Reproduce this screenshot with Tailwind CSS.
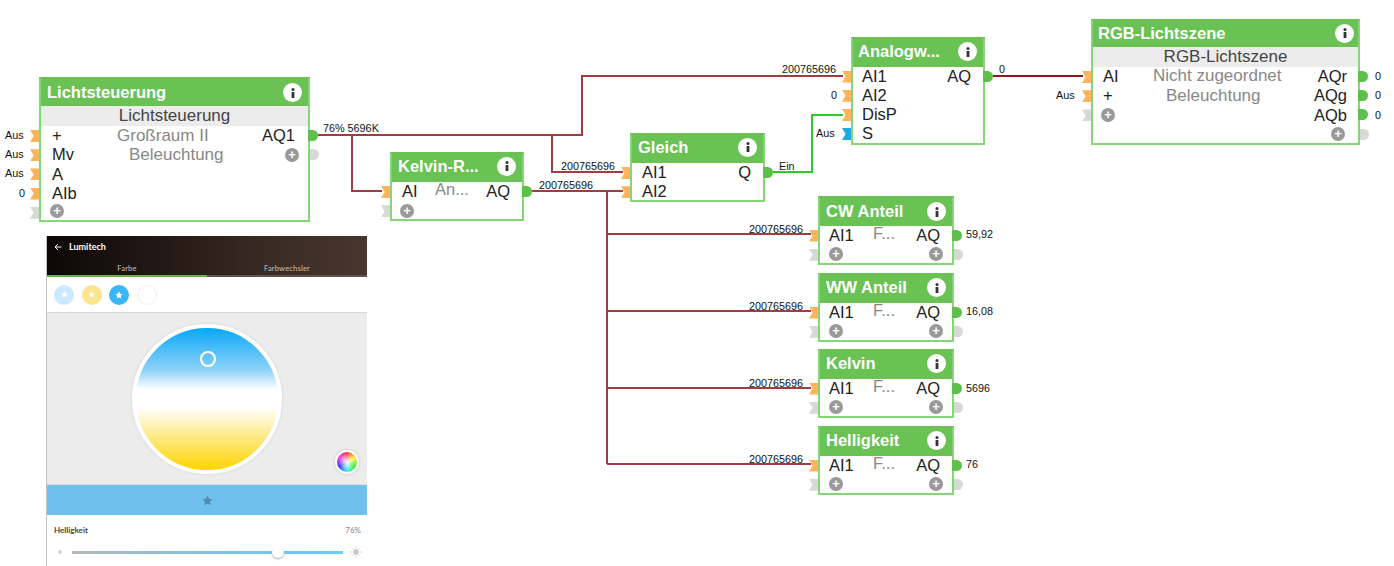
<!DOCTYPE html>
<html lang="de">
<head>
  <meta charset="UTF-8">
  <title>Lichtsteuerung</title>
  <script src="https://cdn.jsdelivr.net/npm/@tailwindcss/browser@4"></script>
</head>
<body class="bg-white">
<div class="relative w-[1394px] h-[566px] overflow-hidden bg-white font-['Liberation_Sans',Arial,sans-serif] text-[#222]">

  <!-- wires -->
  <svg class="absolute left-0 top-0" width="1394" height="566" fill="none">
    <g stroke="#a13c42" stroke-width="2">
      <path d="M318 135H582V76H843"/>
      <path d="M352 135V191H382"/>
      <path d="M552 135V172H623"/>
      <path d="M532 191H623"/>
      <path d="M607 191V464"/>
      <path d="M607 234H811"/>
      <path d="M607 311H811"/>
      <path d="M607 388H811"/>
      <path d="M607 464H811"/>
    </g>
    <path d="M993 76H1083" stroke="#8e1a20" stroke-width="2"/>
    <path d="M772 172H812V115H843" stroke="#2ccb2c" stroke-width="2"/>
  </svg>

  <!-- wire values -->
  <div class="absolute inset-0 text-[10.8px] leading-[12px] text-[#111]">
    <span class="absolute left-[323px] top-[122px]">76% 5696K</span>
    <span class="absolute left-[561px] top-[160px]">200765696</span>
    <span class="absolute left-[539px] top-[179px]">200765696</span>
    <span class="absolute left-[782px] top-[63px]">200765696</span>
    <span class="absolute left-[999px] top-[63px]">0</span>
    <span class="absolute left-[779px] top-[160px]">Ein</span>
    <span class="absolute left-[816px] top-[127px]">Aus</span>
    <span class="absolute left-[831px] top-[89px]">0</span>
    <span class="absolute left-[1056px] top-[89px]">Aus</span>
    <span class="absolute left-[5px] top-[129px]">Aus</span>
    <span class="absolute left-[5px] top-[148px]">Aus</span>
    <span class="absolute left-[5px] top-[167px]">Aus</span>
    <span class="absolute left-[19px] top-[187px]">0</span>
    <span class="absolute left-[749px] top-[223px]">200765696</span>
    <span class="absolute left-[749px] top-[300px]">200765696</span>
    <span class="absolute left-[749px] top-[377px]">200765696</span>
    <span class="absolute left-[749px] top-[453px]">200765696</span>
    <span class="absolute left-[966px] top-[228px]">59,92</span>
    <span class="absolute left-[966px] top-[305px]">16,08</span>
    <span class="absolute left-[966px] top-[382px]">5696</span>
    <span class="absolute left-[966px] top-[458px]">76</span>
    <span class="absolute left-[1375px] top-[70px]">0</span>
    <span class="absolute left-[1375px] top-[89px]">0</span>
    <span class="absolute left-[1375px] top-[109px]">0</span>
  </div>

  <!-- Lichtsteuerung -->
  <div class="absolute left-[39px] top-[77px] w-[271px] h-[145px] border-2 border-[#84d677] border-t-[#69c253] bg-white">
    <div class="flex items-center justify-between h-[27px] pl-[6px] pr-[6px] bg-[#69c253] text-white font-bold text-[16.5px]">
      <span>Lichtsteuerung</span>
      <span class="flex items-center justify-center w-[19px] h-[19px] rounded-full bg-white"><svg width="4" height="10" viewBox="0 0 4 10" fill="#333"><circle cx="2" cy="1.6" r="1.5"/><rect x="0.6" y="4" width="2.8" height="6"/></svg></span>
    </div>
    <div class="h-[20px] bg-[#ececec] text-center text-[17px] leading-[20px] text-[#444]">Lichtsteuerung</div>
    <div class="relative flex items-center h-[19.2px] pl-[11px] pr-[13px] text-[16.5px]">
      <i class="absolute left-[-11px] top-[4px] w-[9px] h-[12px] bg-[#fdb45c] [clip-path:polygon(0_0,100%_0,100%_100%,0_100%,40%_50%)]"></i>
      <span class="w-[65px]">+</span>
      <span class="flex-1 text-[#888] text-[17px]">Großraum II</span>
      <span>AQ1</span>
      <i class="absolute right-[-10px] top-[4px] w-[10px] h-[11px] rounded-r-full bg-[#5cc04a]"></i>
    </div>
    <div class="relative flex items-center h-[19.2px] pl-[11px] pr-[9px] text-[16.5px]">
      <i class="absolute left-[-11px] top-[4px] w-[9px] h-[12px] bg-[#fdb45c] [clip-path:polygon(0_0,100%_0,100%_100%,0_100%,40%_50%)]"></i>
      <span class="w-[77px]">Mv</span>
      <span class="flex-1 text-[#888] text-[17px]">Beleuchtung</span>
      <i class="w-[14px] h-[14px] rounded-full bg-[#999] text-white text-center not-italic font-bold text-[13px] leading-[14px]">+</i>
      <i class="absolute right-[-11px] top-[4px] w-[9px] h-[11px] rounded-r-full bg-[#d8d8d4]"></i>
    </div>
    <div class="relative flex items-center h-[19.2px] pl-[11px] text-[16.5px]">
      <i class="absolute left-[-11px] top-[4px] w-[9px] h-[12px] bg-[#fdb45c] [clip-path:polygon(0_0,100%_0,100%_100%,0_100%,40%_50%)]"></i>
      <span>A</span>
    </div>
    <div class="relative flex items-center h-[19.2px] pl-[11px] text-[16.5px]">
      <i class="absolute left-[-11px] top-[4px] w-[9px] h-[12px] bg-[#fdb45c] [clip-path:polygon(0_0,100%_0,100%_100%,0_100%,40%_50%)]"></i>
      <span>AIb</span>
    </div>
    <div class="relative flex items-center h-[19.2px] pl-[9px]">
      <i class="absolute left-[-11px] top-[4px] w-[9px] h-[12px] bg-[#d8d8d4] [clip-path:polygon(0_0,100%_0,100%_100%,0_100%,40%_50%)]"></i>
      <i class="w-[14px] h-[14px] rounded-full bg-[#999] text-white text-center not-italic font-bold text-[13px] leading-[14px] -translate-y-[1px]">+</i>
    </div>
  </div>

  <!-- Kelvin-R... -->
  <div class="absolute left-[390px] top-[152px] w-[134px] h-[69px] border-2 border-[#84d677] border-t-[#69c253] bg-white">
    <div class="flex items-center justify-between h-[28px] pl-[6px] pr-[6px] pb-[4px] bg-[#69c253] text-white font-bold text-[16.5px]">
      <span>Kelvin-R...</span>
      <span class="flex items-center justify-center w-[19px] h-[19px] rounded-full bg-white"><svg width="4" height="10" viewBox="0 0 4 10" fill="#333"><circle cx="2" cy="1.6" r="1.5"/><rect x="0.6" y="4" width="2.8" height="6"/></svg></span>
    </div>
    <div class="relative flex items-center h-[19.2px] pl-[10px] pr-[12px] text-[16.5px]">
      <i class="absolute left-[-11px] top-[4px] w-[9px] h-[12px] bg-[#fdb45c] [clip-path:polygon(0_0,100%_0,100%_100%,0_100%,40%_50%)]"></i>
      <span class="w-[33px]">AI</span>
      <span class="flex-1 text-[#888] -translate-y-[2px]">An...</span>
      <span>AQ</span>
      <i class="absolute right-[-10px] top-[4px] w-[10px] h-[11px] rounded-r-full bg-[#5cc04a]"></i>
    </div>
    <div class="relative flex items-center h-[19.2px] pl-[8px]">
      <i class="absolute left-[-11px] top-[4px] w-[9px] h-[12px] bg-[#d8d8d4] [clip-path:polygon(0_0,100%_0,100%_100%,0_100%,40%_50%)]"></i>
      <i class="w-[14px] h-[14px] rounded-full bg-[#999] text-white text-center not-italic font-bold text-[13px] leading-[14px]">+</i>
    </div>
  </div>

  <!-- Gleich -->
  <div class="absolute left-[630px] top-[133px] w-[135px] h-[69px] border-2 border-[#84d677] border-t-[#69c253] bg-white">
    <div class="flex items-center justify-between h-[28px] pl-[6px] pr-[6px] pb-[4px] bg-[#69c253] text-white font-bold text-[16.5px]">
      <span>Gleich</span>
      <span class="flex items-center justify-center w-[19px] h-[19px] rounded-full bg-white"><svg width="4" height="10" viewBox="0 0 4 10" fill="#333"><circle cx="2" cy="1.6" r="1.5"/><rect x="0.6" y="4" width="2.8" height="6"/></svg></span>
    </div>
    <div class="relative flex items-center justify-between h-[19.2px] pl-[10px] pr-[12px] text-[16.5px]">
      <i class="absolute left-[-11px] top-[4px] w-[9px] h-[12px] bg-[#fdb45c] [clip-path:polygon(0_0,100%_0,100%_100%,0_100%,40%_50%)]"></i>
      <span>AI1</span>
      <span>Q</span>
      <i class="absolute right-[-10px] top-[4px] w-[10px] h-[11px] rounded-r-full bg-[#5cc04a]"></i>
    </div>
    <div class="relative flex items-center h-[19.2px] pl-[10px] text-[16.5px]">
      <i class="absolute left-[-11px] top-[4px] w-[9px] h-[12px] bg-[#fdb45c] [clip-path:polygon(0_0,100%_0,100%_100%,0_100%,40%_50%)]"></i>
      <span>AI2</span>
    </div>
  </div>

  <!-- Analogw... -->
  <div class="absolute left-[851px] top-[37px] w-[134px] h-[108px] border-2 border-[#84d677] border-t-[#69c253] bg-white">
    <div class="flex items-center justify-between h-[27.5px] pl-[5px] pr-[6px] pb-[2px] bg-[#69c253] text-white font-bold text-[16.5px]">
      <span>Analogw...</span>
      <span class="flex items-center justify-center w-[19px] h-[19px] rounded-full bg-white"><svg width="4" height="10" viewBox="0 0 4 10" fill="#333"><circle cx="2" cy="1.6" r="1.5"/><rect x="0.6" y="4" width="2.8" height="6"/></svg></span>
    </div>
    <div class="relative flex items-center justify-between h-[19.2px] pl-[9px] pr-[12px] text-[16.5px]">
      <i class="absolute left-[-11px] top-[4px] w-[9px] h-[12px] bg-[#fdb45c] [clip-path:polygon(0_0,100%_0,100%_100%,0_100%,40%_50%)]"></i>
      <span>AI1</span>
      <span>AQ</span>
      <i class="absolute right-[-10px] top-[4px] w-[10px] h-[11px] rounded-r-full bg-[#5cc04a]"></i>
    </div>
    <div class="relative flex items-center h-[19.2px] pl-[9px] text-[16.5px]">
      <i class="absolute left-[-11px] top-[4px] w-[9px] h-[12px] bg-[#fdb45c] [clip-path:polygon(0_0,100%_0,100%_100%,0_100%,40%_50%)]"></i>
      <span>AI2</span>
    </div>
    <div class="relative flex items-center h-[19.2px] pl-[9px] text-[16.5px]">
      <i class="absolute left-[-11px] top-[4px] w-[9px] h-[12px] bg-[#fdb45c] [clip-path:polygon(0_0,100%_0,100%_100%,0_100%,40%_50%)]"></i>
      <span>DisP</span>
    </div>
    <div class="relative flex items-center h-[19.2px] pl-[9px] text-[16.5px]">
      <i class="absolute left-[-11px] top-[4px] w-[9px] h-[12px] bg-[#1cabe0] [clip-path:polygon(0_0,100%_0,100%_100%,0_100%,40%_50%)]"></i>
      <span>S</span>
    </div>
  </div>

  <!-- RGB-Lichtszene -->
  <div class="absolute left-[1091px] top-[19px] w-[269px] h-[126px] border-2 border-[#84d677] border-t-[#69c253] bg-white">
    <div class="flex items-center justify-between h-[26px] pl-[5px] pr-[4px] pb-[2px] bg-[#69c253] text-white font-bold text-[16.5px]">
      <span>RGB-Lichtszene</span>
      <span class="flex items-center justify-center w-[19px] h-[19px] rounded-full bg-white"><svg width="4" height="10" viewBox="0 0 4 10" fill="#333"><circle cx="2" cy="1.6" r="1.5"/><rect x="0.6" y="4" width="2.8" height="6"/></svg></span>
    </div>
    <div class="h-[20px] bg-[#ececec] text-center text-[17px] leading-[20px] text-[#444]">RGB-Lichtszene</div>
    <div class="relative flex items-center h-[19.2px] pl-[10px] pr-[11px] text-[16.5px]">
      <i class="absolute left-[-11px] top-[4px] w-[9px] h-[12px] bg-[#fdb45c] [clip-path:polygon(0_0,100%_0,100%_100%,0_100%,40%_50%)]"></i>
      <span class="w-[50px]">AI</span>
      <span class="flex-1 text-[#888] text-[17px] -translate-y-[1px]">Nicht zugeordnet</span>
      <span>AQr</span>
      <i class="absolute right-[-10px] top-[4px] w-[10px] h-[11px] rounded-r-full bg-[#5cc04a]"></i>
    </div>
    <div class="relative flex items-center h-[19.2px] pl-[10px] pr-[11px] text-[16.5px]">
      <i class="absolute left-[-11px] top-[4px] w-[9px] h-[12px] bg-[#fdb45c] [clip-path:polygon(0_0,100%_0,100%_100%,0_100%,40%_50%)]"></i>
      <span class="w-[63px]">+</span>
      <span class="flex-1 text-[#888] text-[17px]">Beleuchtung</span>
      <span>AQg</span>
      <i class="absolute right-[-10px] top-[4px] w-[10px] h-[11px] rounded-r-full bg-[#5cc04a]"></i>
    </div>
    <div class="relative flex items-center justify-between h-[19.2px] pl-[8px] pr-[11px] text-[16.5px]">
      <i class="absolute left-[-11px] top-[4px] w-[9px] h-[12px] bg-[#d8d8d4] [clip-path:polygon(0_0,100%_0,100%_100%,0_100%,40%_50%)]"></i>
      <i class="w-[14px] h-[14px] rounded-full bg-[#999] text-white text-center not-italic font-bold text-[13px] leading-[14px]">+</i>
      <span>AQb</span>
      <i class="absolute right-[-10px] top-[4px] w-[10px] h-[11px] rounded-r-full bg-[#5cc04a]"></i>
    </div>
    <div class="relative flex items-center justify-end h-[19.2px] pr-[13px]">
      <i class="w-[14px] h-[14px] rounded-full bg-[#999] text-white text-center not-italic font-bold text-[13px] leading-[14px]">+</i>
      <i class="absolute right-[-11px] top-[4px] w-[9px] h-[11px] rounded-r-full bg-[#d8d8d4]"></i>
    </div>
  </div>

  <!-- CW Anteil -->
  <div class="absolute left-[818px] top-[196px] w-[136px] h-[69px] border-2 border-[#84d677] border-t-[#69c253] bg-white">
    <div class="flex items-center justify-between h-[27.5px] pl-[6px] pr-[6px] bg-[#69c253] text-white font-bold text-[16.5px]">
      <span>CW Anteil</span>
      <span class="flex items-center justify-center w-[19px] h-[19px] rounded-full bg-white"><svg width="4" height="10" viewBox="0 0 4 10" fill="#333"><circle cx="2" cy="1.6" r="1.5"/><rect x="0.6" y="4" width="2.8" height="6"/></svg></span>
    </div>
    <div class="relative flex items-center h-[19.2px] pl-[9px] pr-[12px] text-[16.5px]">
      <i class="absolute left-[-11px] top-[4px] w-[9px] h-[12px] bg-[#fdb45c] [clip-path:polygon(0_0,100%_0,100%_100%,0_100%,40%_50%)]"></i>
      <span class="w-[44px]">AI1</span>
      <span class="flex-1 text-[#888] -translate-y-[2px]">F...</span>
      <span>AQ</span>
      <i class="absolute right-[-10px] top-[4px] w-[10px] h-[11px] rounded-r-full bg-[#5cc04a]"></i>
    </div>
    <div class="relative flex items-center justify-between h-[19.2px] pl-[9px] pr-[9px]">
      <i class="absolute left-[-11px] top-[4px] w-[9px] h-[12px] bg-[#d8d8d4] [clip-path:polygon(0_0,100%_0,100%_100%,0_100%,40%_50%)]"></i>
      <i class="w-[14px] h-[14px] rounded-full bg-[#999] text-white text-center not-italic font-bold text-[13px] leading-[14px]">+</i>
      <i class="w-[14px] h-[14px] rounded-full bg-[#999] text-white text-center not-italic font-bold text-[13px] leading-[14px]">+</i>
      <i class="absolute right-[-11px] top-[4px] w-[9px] h-[11px] rounded-r-full bg-[#d8d8d4]"></i>
    </div>
  </div>

  <!-- WW Anteil -->
  <div class="absolute left-[818px] top-[273px] w-[136px] h-[69px] border-2 border-[#84d677] border-t-[#69c253] bg-white">
    <div class="flex items-center justify-between h-[27.5px] pl-[6px] pr-[6px] pb-[2px] bg-[#69c253] text-white font-bold text-[16.5px]">
      <span>WW Anteil</span>
      <span class="flex items-center justify-center w-[19px] h-[19px] rounded-full bg-white"><svg width="4" height="10" viewBox="0 0 4 10" fill="#333"><circle cx="2" cy="1.6" r="1.5"/><rect x="0.6" y="4" width="2.8" height="6"/></svg></span>
    </div>
    <div class="relative flex items-center h-[19.2px] pl-[9px] pr-[12px] text-[16.5px]">
      <i class="absolute left-[-11px] top-[4px] w-[9px] h-[12px] bg-[#fdb45c] [clip-path:polygon(0_0,100%_0,100%_100%,0_100%,40%_50%)]"></i>
      <span class="w-[44px]">AI1</span>
      <span class="flex-1 text-[#888] -translate-y-[2px]">F...</span>
      <span>AQ</span>
      <i class="absolute right-[-10px] top-[4px] w-[10px] h-[11px] rounded-r-full bg-[#5cc04a]"></i>
    </div>
    <div class="relative flex items-center justify-between h-[19.2px] pl-[9px] pr-[9px]">
      <i class="absolute left-[-11px] top-[4px] w-[9px] h-[12px] bg-[#d8d8d4] [clip-path:polygon(0_0,100%_0,100%_100%,0_100%,40%_50%)]"></i>
      <i class="w-[14px] h-[14px] rounded-full bg-[#999] text-white text-center not-italic font-bold text-[13px] leading-[14px]">+</i>
      <i class="w-[14px] h-[14px] rounded-full bg-[#999] text-white text-center not-italic font-bold text-[13px] leading-[14px]">+</i>
      <i class="absolute right-[-11px] top-[4px] w-[9px] h-[11px] rounded-r-full bg-[#d8d8d4]"></i>
    </div>
  </div>

  <!-- Kelvin -->
  <div class="absolute left-[818px] top-[349px] w-[136px] h-[69px] border-2 border-[#84d677] border-t-[#69c253] bg-white">
    <div class="flex items-center justify-between h-[27.5px] pl-[6px] pr-[6px] pb-[2px] bg-[#69c253] text-white font-bold text-[16.5px]">
      <span>Kelvin</span>
      <span class="flex items-center justify-center w-[19px] h-[19px] rounded-full bg-white"><svg width="4" height="10" viewBox="0 0 4 10" fill="#333"><circle cx="2" cy="1.6" r="1.5"/><rect x="0.6" y="4" width="2.8" height="6"/></svg></span>
    </div>
    <div class="relative flex items-center h-[19.2px] pl-[9px] pr-[12px] text-[16.5px]">
      <i class="absolute left-[-11px] top-[4px] w-[9px] h-[12px] bg-[#fdb45c] [clip-path:polygon(0_0,100%_0,100%_100%,0_100%,40%_50%)]"></i>
      <span class="w-[44px]">AI1</span>
      <span class="flex-1 text-[#888] -translate-y-[2px]">F...</span>
      <span>AQ</span>
      <i class="absolute right-[-10px] top-[4px] w-[10px] h-[11px] rounded-r-full bg-[#5cc04a]"></i>
    </div>
    <div class="relative flex items-center justify-between h-[19.2px] pl-[9px] pr-[9px]">
      <i class="absolute left-[-11px] top-[4px] w-[9px] h-[12px] bg-[#d8d8d4] [clip-path:polygon(0_0,100%_0,100%_100%,0_100%,40%_50%)]"></i>
      <i class="w-[14px] h-[14px] rounded-full bg-[#999] text-white text-center not-italic font-bold text-[13px] leading-[14px]">+</i>
      <i class="w-[14px] h-[14px] rounded-full bg-[#999] text-white text-center not-italic font-bold text-[13px] leading-[14px]">+</i>
      <i class="absolute right-[-11px] top-[4px] w-[9px] h-[11px] rounded-r-full bg-[#d8d8d4]"></i>
    </div>
  </div>

  <!-- Helligkeit -->
  <div class="absolute left-[818px] top-[426px] w-[136px] h-[69px] border-2 border-[#84d677] border-t-[#69c253] bg-white">
    <div class="flex items-center justify-between h-[27.5px] pl-[6px] pr-[6px] pb-[2px] bg-[#69c253] text-white font-bold text-[16.5px]">
      <span>Helligkeit</span>
      <span class="flex items-center justify-center w-[19px] h-[19px] rounded-full bg-white"><svg width="4" height="10" viewBox="0 0 4 10" fill="#333"><circle cx="2" cy="1.6" r="1.5"/><rect x="0.6" y="4" width="2.8" height="6"/></svg></span>
    </div>
    <div class="relative flex items-center h-[19.2px] pl-[9px] pr-[12px] text-[16.5px]">
      <i class="absolute left-[-11px] top-[4px] w-[9px] h-[12px] bg-[#fdb45c] [clip-path:polygon(0_0,100%_0,100%_100%,0_100%,40%_50%)]"></i>
      <span class="w-[44px]">AI1</span>
      <span class="flex-1 text-[#888] -translate-y-[2px]">F...</span>
      <span>AQ</span>
      <i class="absolute right-[-10px] top-[4px] w-[10px] h-[11px] rounded-r-full bg-[#5cc04a]"></i>
    </div>
    <div class="relative flex items-center justify-between h-[19.2px] pl-[9px] pr-[9px]">
      <i class="absolute left-[-11px] top-[4px] w-[9px] h-[12px] bg-[#d8d8d4] [clip-path:polygon(0_0,100%_0,100%_100%,0_100%,40%_50%)]"></i>
      <i class="w-[14px] h-[14px] rounded-full bg-[#999] text-white text-center not-italic font-bold text-[13px] leading-[14px]">+</i>
      <i class="w-[14px] h-[14px] rounded-full bg-[#999] text-white text-center not-italic font-bold text-[13px] leading-[14px]">+</i>
      <i class="absolute right-[-11px] top-[4px] w-[9px] h-[11px] rounded-r-full bg-[#d8d8d4]"></i>
    </div>
  </div>

  <!-- Lumitech app screenshot -->
  <div class="absolute left-[46px] top-[236px] w-[321px] h-[330px] flex flex-col font-['Lato',sans-serif] bg-white border-l border-[#c4c4c4]">
    <div class="h-[41px] flex flex-col bg-gradient-to-r from-[#0d0806] via-[#3a2b24] via-70% to-[#47362c]">
      <div class="h-[22px] flex items-center gap-[7px] pl-[7px] text-white font-bold text-[9px]">
        <svg width="8" height="8" viewBox="0 0 8 8" fill="none" stroke="white" stroke-width="1"><path d="M7.5 4H1M4 1L1 4L4 7"/></svg>
        <span>Lumitech</span>
      </div>
      <div class="flex flex-1 text-[7.5px] tracking-[0.2px] text-[#c4c2c0]">
        <span class="flex-1 text-center pt-[6px] leading-[12px] border-b-2 border-[#69b04f]">Farbe</span>
        <span class="flex-1 text-center pt-[6px] leading-[12px] border-b-2 border-[#5b5350]">Farbwechsler</span>
      </div>
    </div>
    <div class="h-[36px] flex items-center gap-[7.5px] pl-[7px] border-b border-[#d8d8d8]">
      <span class="flex items-center justify-center w-[20px] h-[20px] rounded-full bg-[#cbeaff]"><svg width="7" height="7" viewBox="0 0 24 24" fill="white"><path d="M12 1l3.4 7.2 7.6 1-5.6 5.4 1.5 7.8L12 18.6l-6.9 3.8 1.5-7.8L1 9.2l7.6-1z"/></svg></span>
      <span class="flex items-center justify-center w-[20px] h-[20px] rounded-full bg-[#fce58e]"><svg width="7" height="7" viewBox="0 0 24 24" fill="white"><path d="M12 1l3.4 7.2 7.6 1-5.6 5.4 1.5 7.8L12 18.6l-6.9 3.8 1.5-7.8L1 9.2l7.6-1z"/></svg></span>
      <span class="flex items-center justify-center w-[20px] h-[20px] rounded-full bg-[#3bb5f6]"><svg width="8" height="8" viewBox="0 0 24 24" fill="white"><path d="M12 1l3.4 7.2 7.6 1-5.6 5.4 1.5 7.8L12 18.6l-6.9 3.8 1.5-7.8L1 9.2l7.6-1z"/></svg></span>
      <span class="w-[20px] h-[20px] rounded-full border border-[#f0f0f0]"></span>
    </div>
    <div class="relative h-[172px] flex items-center justify-center bg-[#ececec] border-b border-[#dcdcdc]">
      <div class="relative w-[150px] h-[150px] rounded-full border-[4px] border-white bg-[linear-gradient(to_bottom,#0aa8f8_0%,#8fd3f8_30%,#ffffff_43%,#ffffff_56%,#fdeea0_72%,#ffd400_100%)] shadow-[0_0_3px_#ccc]">
        <span class="absolute left-[64px] top-[23px] w-[16px] h-[16px] rounded-full border-[2px] border-white"></span>
      </div>
      <span class="absolute left-[288px] top-[137px] w-[24px] h-[24px] rounded-full border-[2px] border-white shadow-[0_0_3px_#bbb] [background:radial-gradient(circle,white,transparent_65%),conic-gradient(#f33,#fe3,#3e3,#3ee,#33f,#e3e,#f33)]"></span>
    </div>
    <div class="h-[30px] flex items-center justify-center bg-[#6fc0ec]">
      <svg width="11" height="11" viewBox="0 0 24 24" fill="#4f8bb2"><path d="M12 1l3.4 7.2 7.6 1-5.6 5.4 1.5 7.8L12 18.6l-6.9 3.8 1.5-7.8L1 9.2l7.6-1z"/></svg>
    </div>
    <div class="flex items-center justify-between h-[30px] pl-[7px] pr-[6px] text-[8px] font-bold text-[#444]">
      <span>Helligkeit</span>
      <span class="font-normal text-[#888]">76%</span>
    </div>
    <div class="flex items-center h-[14px] pl-[10px] gap-[9px]">
      <svg width="6" height="6" viewBox="0 0 6 6"><circle cx="3" cy="3" r="1.8" fill="#ccc"/></svg>
      <div class="relative w-[271px] h-[3px] bg-[linear-gradient(to_right,#b2b8bb_0%,#70c4f0_76%,#70ccf9_100%)]">
        <span class="absolute left-[200px] top-[-5px] w-[12px] h-[12px] rounded-full bg-white shadow-[0_1px_2px_#aaa]"></span>
      </div>
      <svg class="-ml-[2px]" width="12" height="12" viewBox="0 0 12 12" stroke="#ccc" stroke-width="0.8"><circle cx="6" cy="6" r="2.7" fill="#ccc"/><path d="M6 0V2M6 10V12M0 6H2M10 6H12M1.8 1.8L3 3M9 9L10.2 10.2M1.8 10.2L3 9M9 3L10.2 1.8"/></svg>
    </div>
  </div>
</div>
</body>
</html>
